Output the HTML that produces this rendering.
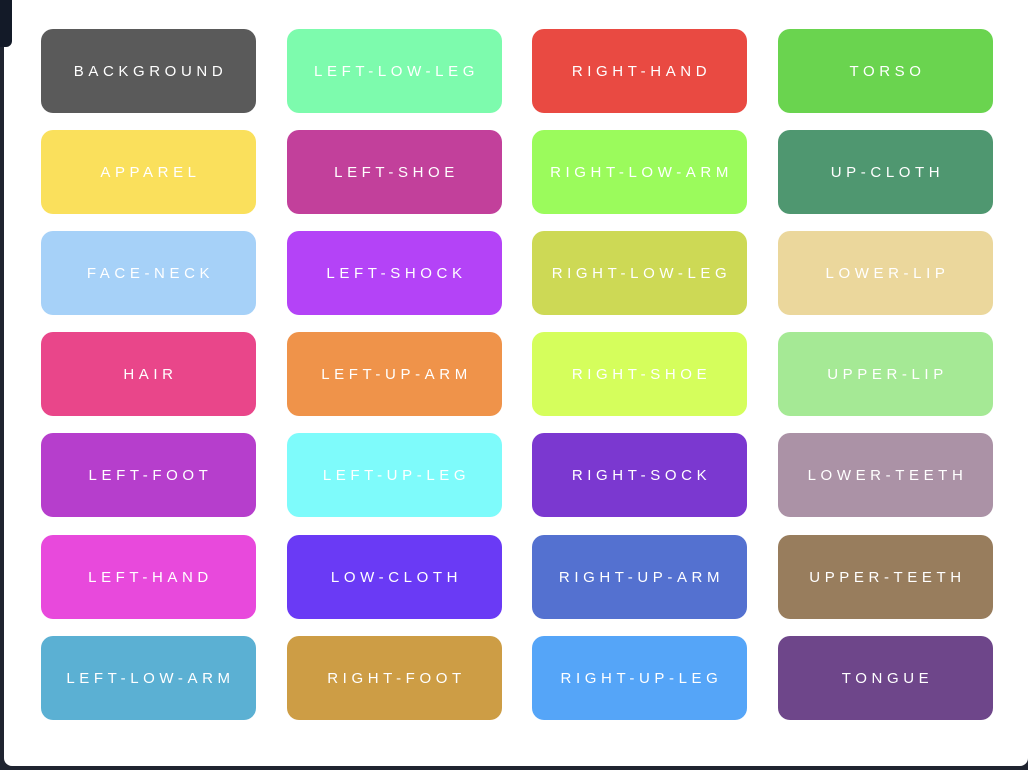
<!DOCTYPE html>
<html><head><meta charset="utf-8"><style>
html,body{margin:0;padding:0;width:1028px;height:770px;overflow:hidden;background:#1f2430;}
.tl{position:absolute;left:0;top:0;width:12px;height:47px;background:#131a28;border-bottom-right-radius:6px;z-index:2}
.panel{position:absolute;left:4px;top:0;width:1024px;height:766px;background:#fff;border-radius:0 0 8px 8px;}
.b{position:absolute;width:215px;height:84px;box-sizing:border-box;padding-left:4px;border-radius:12px;display:flex;align-items:center;justify-content:center;color:#fff;font-family:"Liberation Sans",sans-serif;font-size:15px;letter-spacing:4.6px;font-weight:500;}
</style></head><body>
<div class="panel"></div><div class="tl"></div>
<div id="g"></div>
<script>
var d=[
["BACKGROUND","#5a5a5a"],["LEFT-LOW-LEG","#7dfbad"],["RIGHT-HAND","#e94a42"],["TORSO","#6ad44f"],
["APPAREL","#fae05c"],["LEFT-SHOE","#c2409b"],["RIGHT-LOW-ARM","#9bfb5c"],["UP-CLOTH","#4f9770"],
["FACE-NECK","#a6d1f8"],["LEFT-SHOCK","#b443f7"],["RIGHT-LOW-LEG","#cdd955"],["LOWER-LIP","#ebd79c"],
["HAIR","#e9468a"],["LEFT-UP-ARM","#ef934a"],["RIGHT-SHOE","#d5fe5c"],["UPPER-LIP","#a5e995"],
["LEFT-FOOT","#b63ecc"],["LEFT-UP-LEG","#7efbfb"],["RIGHT-SOCK","#7b38d0"],["LOWER-TEETH","#ab92a6"],
["LEFT-HAND","#e849dc"],["LOW-CLOTH","#6a3af5"],["RIGHT-UP-ARM","#5471d0"],["UPPER-TEETH","#987d5d"],
["LEFT-LOW-ARM","#5bb0d3"],["RIGHT-FOOT","#cd9d45"],["RIGHT-UP-LEG","#55a5f8"],["TONGUE","#6e468a"]];
var xs=[41,287,532,778],ys=[29,130,231,332,433,535,636],h="";
d.forEach(function(e,i){h+='<div class="b" style="left:'+xs[i%4]+'px;top:'+ys[Math.floor(i/4)]+'px;background:'+e[1]+'">'+e[0]+'</div>';});
document.getElementById('g').innerHTML=h;
</script>
</body></html>
